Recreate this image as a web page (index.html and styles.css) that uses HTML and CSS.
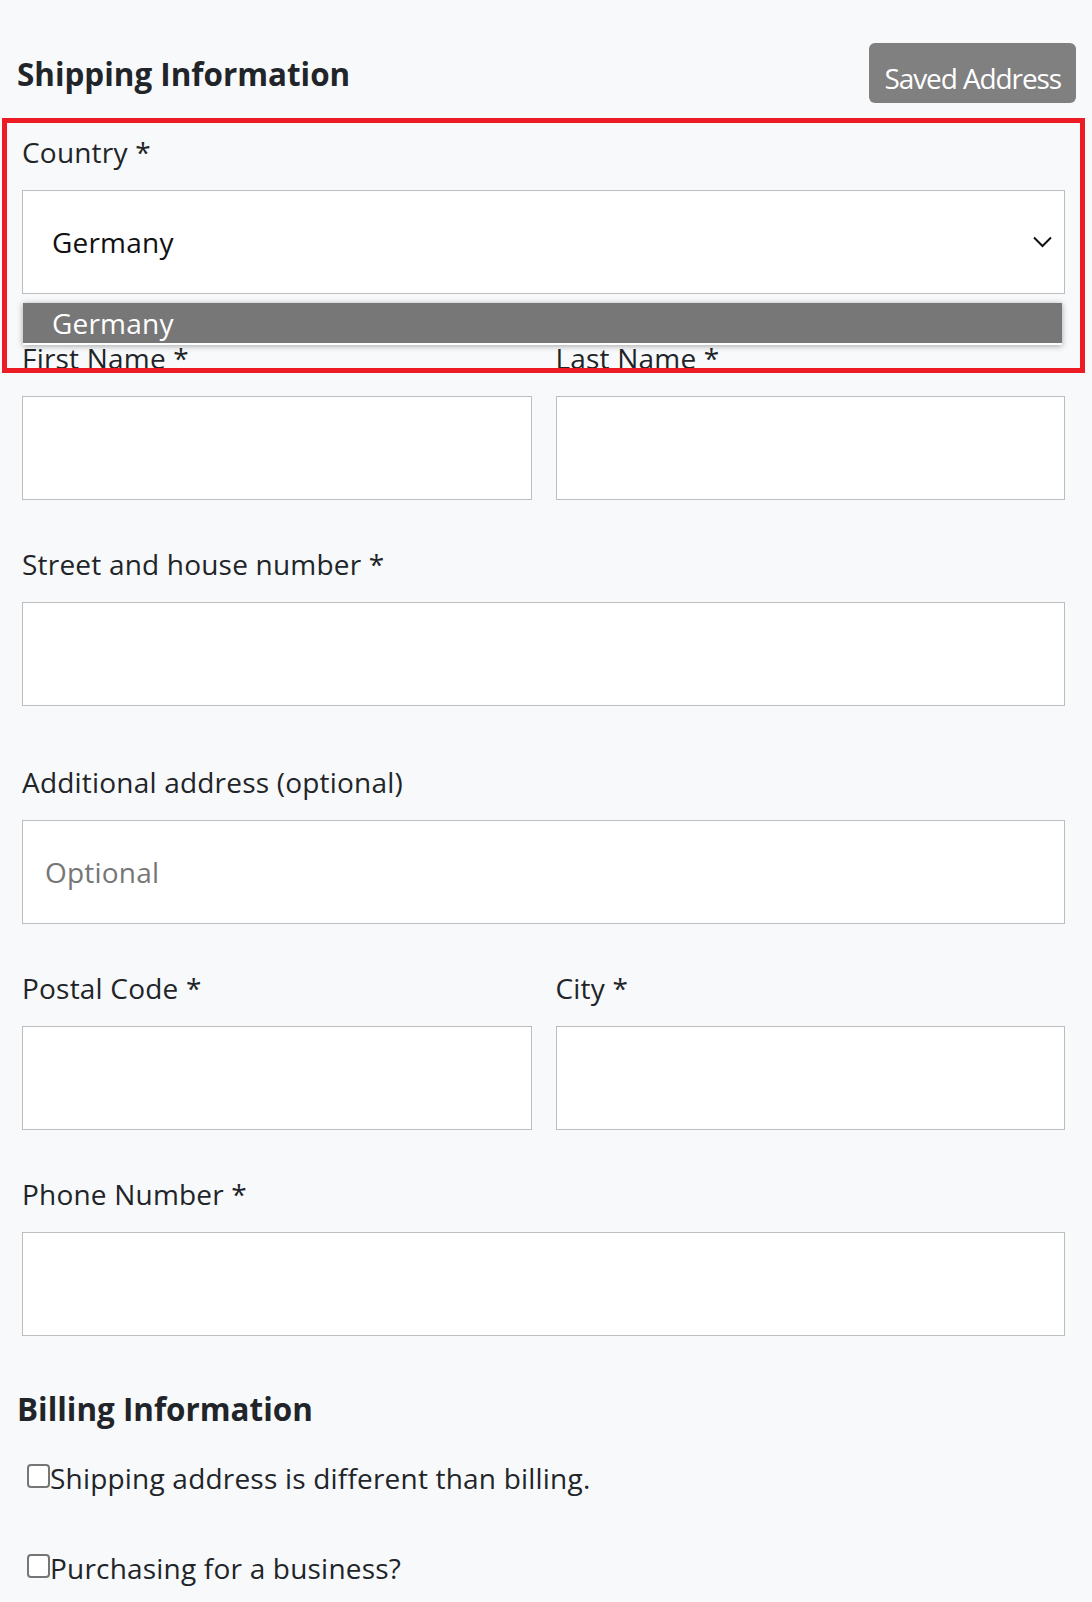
FILE: index.html
```html
<!DOCTYPE html>
<html lang="en">
<head>
<meta charset="utf-8">
<title>Shipping Information</title>
<link rel="stylesheet" href="styles.css">
</head>
<body>
<div class="page">
  <header class="head">
    <h2 class="title">Shipping Information</h2>
    <button class="btn-saved" type="button">Saved Address</button>
  </header>

  <form class="form">
    <div class="field country">
      <label class="lbl">Country *</label>
      <div class="select">
        <span>Germany</span>
        <svg width="19" height="12" viewBox="0 0 19 12" aria-hidden="true"><path d="M1 1.5 L9.5 10 L18 1.5" fill="none" stroke="#111" stroke-width="2"/></svg>
      </div>
      <ul class="menu"><li>Germany</li></ul>
    </div>

    <div class="row">
      <div class="field">
        <label class="lbl">First Name *</label>
        <input class="inp" type="text">
      </div>
      <div class="field">
        <label class="lbl">Last Name *</label>
        <input class="inp" type="text">
      </div>
    </div>

    <div class="field street">
      <label class="lbl">Street and house number *</label>
      <input class="inp" type="text">
    </div>

    <div class="field">
      <label class="lbl">Additional address (optional)</label>
      <input class="inp" type="text" placeholder="Optional">
    </div>

    <div class="row">
      <div class="field">
        <label class="lbl">Postal Code *</label>
        <input class="inp" type="text">
      </div>
      <div class="field">
        <label class="lbl">City *</label>
        <input class="inp" type="text">
      </div>
    </div>

    <div class="field last">
      <label class="lbl">Phone Number *</label>
      <input class="inp" type="text">
    </div>
  </form>

  <h2 class="title billing">Billing Information</h2>
  <label class="check first"><input type="checkbox" class="cb">Shipping address is different than billing.</label>
  <label class="check second"><input type="checkbox" class="cb">Purchasing for a business?</label>

  <div class="highlight"></div>
</div>
</body>
</html>
```

FILE: styles.css
```css
* { box-sizing: border-box; }

html, body {
  margin: 0;
  padding: 0;
  background: #f8f9fa;
}

body {
  font-family: "Open Sans", "Noto Sans", sans-serif;
  font-size: 28px;
  line-height: 42px;
  letter-spacing: 0.2px;
  color: #212529;
}

.page {
  position: relative;
  padding: 0 16px 0 17px;
}

.head {
  display: flex;
  justify-content: space-between;
  align-items: flex-start;
  padding-top: 43px;
}

.title {
  margin: 12.4px 0 0 0;
  font-size: 31.4px;
  line-height: 38.4px;
  font-weight: 700;
  letter-spacing: 0;
  color: #212529;
}

.btn-saved {
  font-family: inherit;
  font-size: 28px;
  line-height: 42px;
  letter-spacing: -1.1px;
  padding: 14px 15px 4px;
  background: #808080;
  color: #fff;
  border: none;
  border-radius: 6px;
}

.form {
  margin: 28px 11px 0 5px;
}

.field {
  margin-bottom: 43px;
}

.field.country {
  position: relative;
}

.field.street {
  margin-bottom: 55px;
}

.field.last {
  margin-bottom: 0;
}

.lbl {
  display: block;
  margin-bottom: 17px;
}

.row {
  display: grid;
  grid-template-columns: 1fr 1fr;
  column-gap: 24px;
}

.inp {
  display: block;
  width: 100%;
  height: 104px;
  margin: 0;
  padding: 0 22px;
  border: 1px solid #bdbdbd;
  border-radius: 0;
  background: #fff;
  font-family: inherit;
  font-size: 28px;
  letter-spacing: 0.2px;
  color: #212529;
  outline: none;
}

.inp::placeholder {
  color: #767676;
}

.select {
  display: flex;
  align-items: center;
  justify-content: space-between;
  height: 104px;
  padding: 0 12px 0 29px;
  border: 1px solid #bdbdbd;
  background: #fff;
  color: #111;
}

.select svg {
  display: block;
  flex: none;
}

.menu {
  position: absolute;
  z-index: 2;
  top: 172px;
  left: 1px;
  width: 1039px;
  height: 42px;
  margin: 0;
  padding: 0 0 0 29px;
  list-style: none;
  background: #777;
  color: #fff;
  line-height: 40px;
  border-bottom: 2px solid #fff;
  box-shadow: 0 1px 6px rgba(0, 0, 0, 0.35);
}

.title.billing {
  margin-top: 54px;
}

.check {
  display: flex;
  align-items: flex-start;
  margin-left: 10px;
}

.check.first {
  margin-top: 28.6px;
}

.check.second {
  margin-top: 48px;
}

.cb {
  appearance: none;
  -webkit-appearance: none;
  flex: none;
  width: 23px;
  height: 24px;
  margin: 7px 0 0 0;
  border: 2px solid #767676;
  border-radius: 4px;
  background: #fff;
}

.highlight {
  position: absolute;
  left: 2px;
  top: 118px;
  width: 1083px;
  height: 255px;
  border: 5px solid #ed1c24;
  pointer-events: none;
  z-index: 3;
}
```
